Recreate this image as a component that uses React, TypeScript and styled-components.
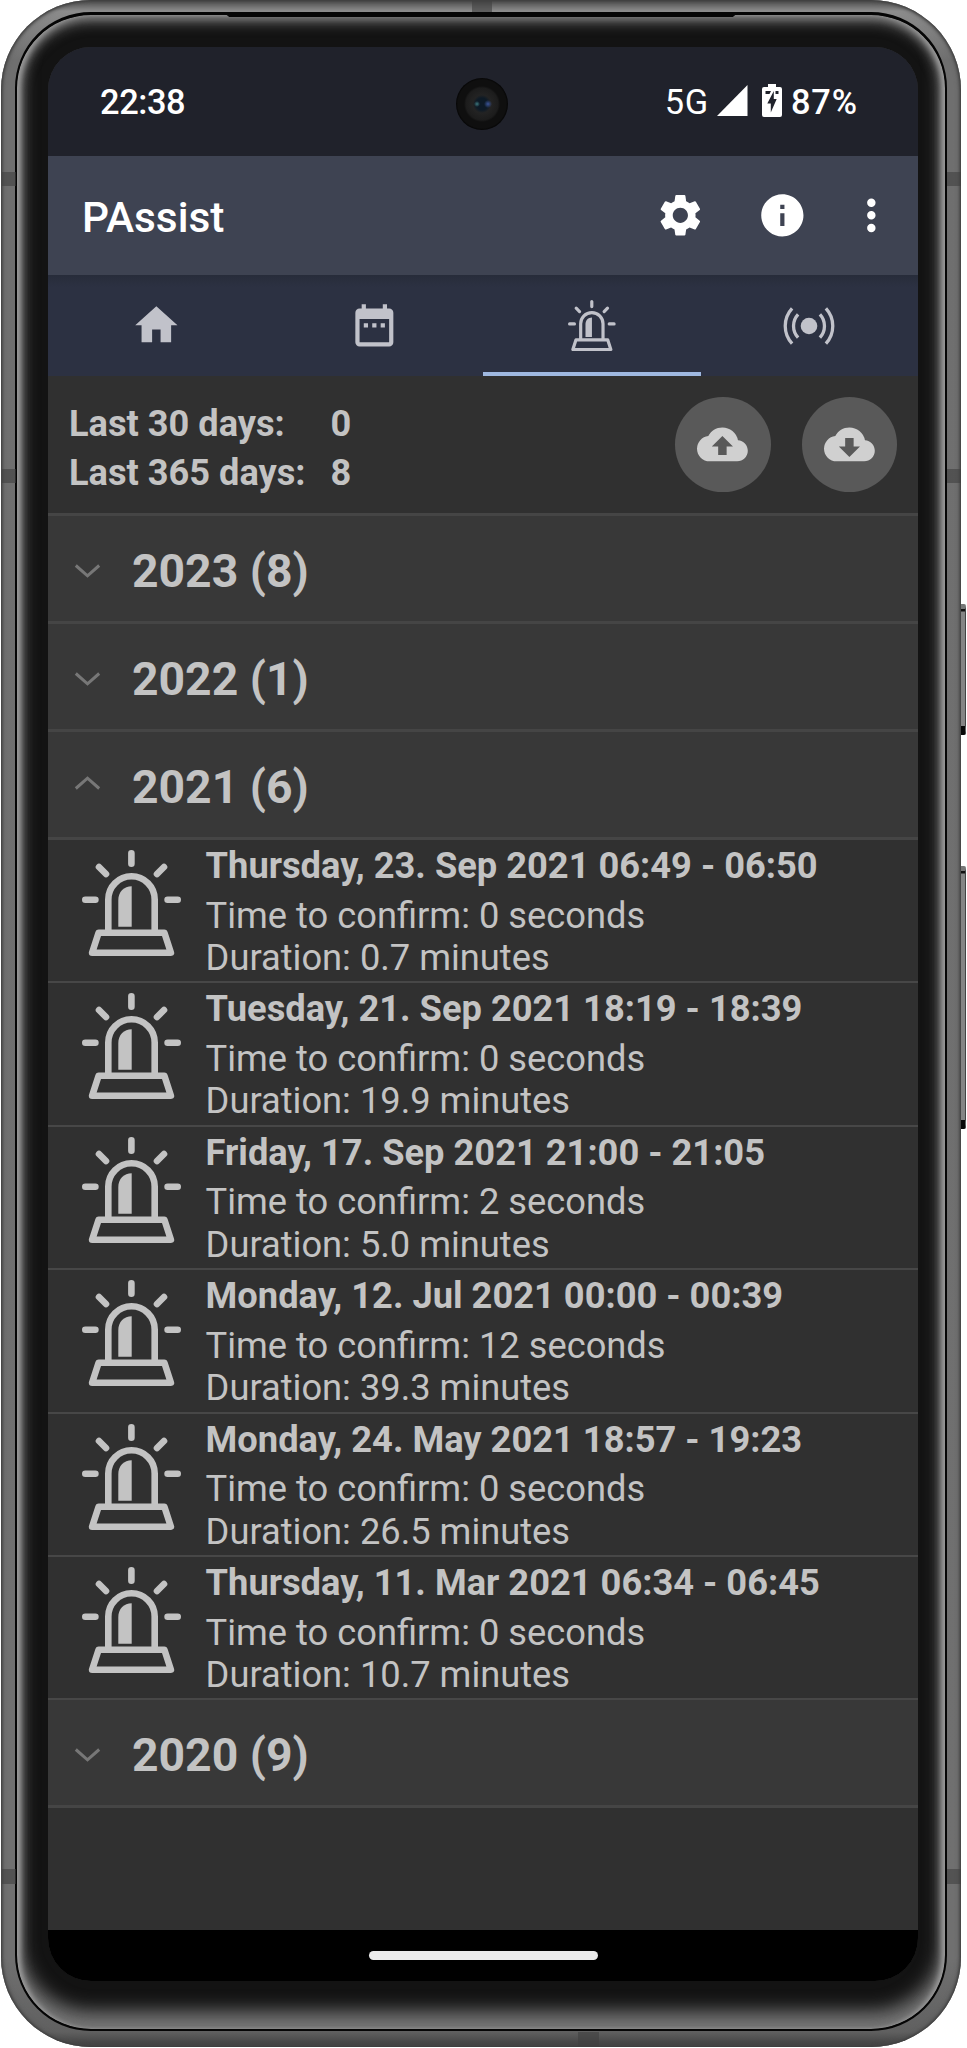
import React from 'react';
import styled, { createGlobalStyle, css } from 'styled-components';
import {
  MdSettings,
  MdInfo,
  MdMoreVert,
  MdHome,
  MdDateRange,
  MdCloudUpload,
  MdCloudDownload,
} from 'react-icons/md';

const GlobalStyle = createGlobalStyle`
  body {
    margin: 0;
    background: #fff;
    font-family: Roboto, 'Liberation Sans', sans-serif;
  }
`;

const Stage = styled.div`
  position: relative;
  width: 967px;
  height: 2048px;
  overflow: hidden;
  box-sizing: border-box;
  padding: 0 0 0 1px;
`;

const Frame = styled.div`
  position: relative;
  box-sizing: border-box;
  width: 960px;
  height: 2047px;
  padding: 12px 14px 16px;
  border-radius: 90px;
  background: linear-gradient(180deg, #4a4a4a 0, #8c8c8c 11px, #6f6f6f 60px, #707070 1960px, #606060 2032px, #3c3c3c 2047px);
  box-shadow: inset 0 0 3px 1px #3a3a3a, inset 0 0 5px 1px #555;
`;

const Glass = styled.div`
  box-sizing: border-box;
  height: 2019px;
  padding: 32px 31px 48px;
  border: 2px solid #050505;
  border-top-width: 3px;
  border-radius: 76px;
  background: #131313;
  box-shadow:
    inset 4px 0 4px -1px #9a9a9a,
    inset -4px 0 4px -1px #9a9a9a,
    inset 0 0 6px 4px #777,
    inset 0 5px 12px 4px #555,
    inset 0 -15px 18px 3px #747474;
`;

const Screen = styled.div`
  position: relative;
  display: flex;
  flex-direction: column;
  width: 870px;
  height: 1934px;
  border-radius: 43px;
  overflow: hidden;
  background: #303030;
  color: #c3c3c3;
`;

const SideButton = styled.div<{ $top: number; $height: number }>`
  position: absolute;
  left: 961px;
  top: ${(p) => p.$top}px;
  width: 5px;
  height: ${(p) => p.$height}px;
  box-sizing: border-box;
  border-top: 5px solid #777;
  border-bottom: 9px solid #080808;
  border-right: 1px solid #444;
  border-radius: 0 2px 2px 0;
  background: linear-gradient(180deg, #111 0 2px, #858585 3px);
`;

const Band = styled.div<{ $x: number; $y: number; $w: number; $h: number }>`
  position: absolute;
  left: ${(p) => p.$x}px;
  top: ${(p) => p.$y}px;
  width: ${(p) => p.$w}px;
  height: ${(p) => p.$h}px;
  background: rgba(64, 64, 64, 0.6);
`;

const Speaker = styled.div`
  position: absolute;
  left: 222px;
  top: 12px;
  width: 516px;
  height: 5px;
  background: #060606;
  clip-path: polygon(0 0, 100% 0, 98.8% 100%, 1.2% 100%);
`;

const Camera = styled.div`
  position: absolute;
  left: 408px;
  top: 31px;
  width: 52px;
  height: 52px;
  border-radius: 50%;
  background:
    radial-gradient(circle at 21px 26px, rgba(74, 143, 147, 0.8) 0, transparent 3px),
    radial-gradient(circle at 32px 26px, rgba(70, 99, 180, 0.8) 0, transparent 4px),
    radial-gradient(circle at 26px 26px, #0d1a26 0 6px, #232323 9px, #1c1c1c 16px, #0f0f0f 18px, #0f0f0f 24px, #050505 26px);
`;

const StatusBar = styled.header`
  display: flex;
  align-items: center;
  flex: 0 0 109px;
  height: 109px;
  box-sizing: border-box;
  padding: 1px 60px 0 52px;
  background: #20222b;
  color: #fff;
  font-size: 34.4px;
  font-weight: 500;
`;

const Clock = styled.span`
  flex: 1;
  letter-spacing: -0.4px;
`;

const Network = styled.span`
  font-weight: 400;
  letter-spacing: 0.7px;
  margin-right: 8px;
`;

const Battery = styled.span`
  letter-spacing: 0.9px;
`;

const SignalIcon = styled.svg`
  width: 31px;
  height: 31px;
  margin: -4px 14px 0 0;
  fill: #fff;
`;

const BatteryIcon = styled.svg`
  width: 20px;
  height: 33px;
  margin: -4px 9px 0 0;
`;

const Toolbar = styled.div`
  display: flex;
  align-items: center;
  flex: 0 0 119px;
  box-sizing: border-box;
  padding: 0 21px 0 34px;
  background: #3e4352;
  color: #fff;
  svg {
    display: block;
    width: 50.7px;
    height: 50.7px;
    margin-top: -1px;
  }
`;

const Title = styled.h1`
  flex: 1;
  margin: 3px 0 0;
  font-size: 42.4px;
  font-weight: 500;
`;

const ToolButton = styled.button<{ $gap: number }>`
  display: block;
  padding: 0;
  margin: 0 ${(p) => p.$gap}px 0 0;
  border: 0;
  background: none;
  color: #fff;
`;

const Tabs = styled.nav`
  display: grid;
  grid-template-columns: repeat(4, 1fr);
  flex: 0 0 101px;
  background: linear-gradient(180deg, #272c3a 0, #2c3142 12px);
`;

const Tab = styled.button<{ $active?: boolean }>`
  display: flex;
  align-items: center;
  justify-content: center;
  height: 101px;
  padding: 0;
  border: 0;
  background: none;
  color: #c1c2ca;
  ${(p) =>
    p.$active &&
    css`
      box-shadow: inset 0 -4px 0 #9fb8e0;
    `}
  svg {
    display: block;
  }
`;

const Summary = styled.section`
  display: flex;
  align-items: center;
  justify-content: space-between;
  flex: 0 0 140px;
  box-sizing: border-box;
  padding: 0 21px;
  border-bottom: 3px solid #454545;
`;

const Totals = styled.dl`
  display: grid;
  grid-template-columns: 261.5px auto;
  grid-auto-rows: 49px;
  margin: 6px 0 0;
  font-size: 36.2px;
  line-height: 49px;
  font-weight: 700;
  dt,
  dd {
    margin: 0;
  }
`;

const Actions = styled.div`
  display: flex;
  gap: 31px;
`;

const RoundButton = styled.button`
  display: flex;
  align-items: center;
  justify-content: center;
  width: 95.5px;
  height: 95.5px;
  padding: 0;
  border: 0;
  border-radius: 50%;
  background: #595959;
  color: #d0d0d0;
  svg {
    width: 50.8px;
    height: 50.8px;
  }
`;

const GroupHeader = styled.div`
  display: flex;
  align-items: center;
  flex: 0 0 108px;
  box-sizing: border-box;
  padding: 5px 0 0 26px;
  border-bottom: 3px solid #454545;
  background: #383838;
`;

const Chevron = styled.svg<{ $open: boolean }>`
  width: 27px;
  height: 16px;
  margin-top: ${(p) => (p.$open ? -8 : 0)}px;
  transform: ${(p) => (p.$open ? 'none' : 'scaleY(-1)')};
  fill: none;
  stroke: #777;
  stroke-width: 3;
`;

const GroupTitle = styled.h2`
  margin: 0 0 0 31px;
  font-size: 46.3px;
  line-height: 54px;
  font-weight: 700;
`;

const Item = styled.article`
  display: flex;
  align-items: flex-start;
  flex: 0 0 143.4px;
  height: 143.4px;
  box-sizing: border-box;
  padding: 4px 0 0 34.3px;
  border-bottom: 2px solid #474747;
`;

const ItemIcon = styled.div`
  flex: 0 0 123.3px;
  padding-top: 6px;
  svg {
    display: block;
  }
`;

const ItemTitle = styled.h3`
  margin: 0 0 7.6px;
  font-size: 36.27px;
  line-height: 43px;
  font-weight: 700;
  white-space: nowrap;
`;

const ItemLine = styled.p`
  margin: 0;
  font-size: 36.27px;
  line-height: 42.4px;
  white-space: nowrap;
`;

const NavBar = styled.footer`
  display: flex;
  justify-content: center;
  flex: 0 0 51px;
  box-sizing: border-box;
  margin-top: auto;
  padding-top: 21px;
  background: #000;
`;

const NavHandle = styled.div`
  width: 229px;
  height: 9px;
  border-radius: 5px;
  background: #ebebeb;
`;

const Siren = ({ width }: { width: number }) => (
  <svg
    width={width}
    height={(width * 106) / 99}
    viewBox="0 0 99 106"
    fill="none"
    stroke="currentColor"
    strokeWidth="6.6"
    strokeLinecap="round"
    strokeLinejoin="round"
  >
    <path d="M49.4 3.3V13.7M3.3 49.7H13.4M85.6 49.7H95.7M17 17L24 24M82 17L75 24" />
    <path d="M26.3 82V49.5a23.2 23.2 0 0 1 46.4 0V82" strokeLinecap="butt" />
    <path d="M16.6 82.7H82.4L88.9 102.7H10.1Z" />
    <path d="M36.3 76.7V50C36.3 42 42 36.3 49.7 36.3V76.7Z" fill="currentColor" stroke="none" />
  </svg>
);

const Broadcast = () => (
  <svg width="56" height="44" viewBox="-28 -22 56 44" fill="none" stroke="currentColor" strokeWidth="3.3">
    <circle r="8.3" fill="currentColor" stroke="none" />
    <path d="M-10.9 -11.6A17 17 0 0 0 -10.9 11.6M10.9 -11.6A17 17 0 0 1 10.9 11.6" />
    <path d="M-16.9 -17.6A26 26 0 0 0 -16.9 17.6M16.9 -17.6A26 26 0 0 1 16.9 17.6" />
  </svg>
);

const Group = ({ year, count, open = false }: { year: number; count: number; open?: boolean }) => (
  <GroupHeader>
    <Chevron $open={open} viewBox="-13.5 -8 27 16">
      <path d="M-11.7 5.5L0 -4.8L11.7 5.5" />
    </Chevron>
    <GroupTitle>
      {year} ({count})
    </GroupTitle>
  </GroupHeader>
);

const alarms = [
  { when: 'Thursday, 23. Sep 2021 06:49 - 06:50', confirm: 0, duration: '0.7' },
  { when: 'Tuesday, 21. Sep 2021 18:19 - 18:39', confirm: 0, duration: '19.9' },
  { when: 'Friday, 17. Sep 2021 21:00 - 21:05', confirm: 2, duration: '5.0' },
  { when: 'Monday, 12. Jul 2021 00:00 - 00:39', confirm: 12, duration: '39.3' },
  { when: 'Monday, 24. May 2021 18:57 - 19:23', confirm: 0, duration: '26.5' },
  { when: 'Thursday, 11. Mar 2021 06:34 - 06:45', confirm: 0, duration: '10.7' },
];

export default function App() {
  return (
    <Stage>
      <GlobalStyle />
      <SideButton $top={604} $height={131} />
      <SideButton $top={866} $height={263} />
      <Frame>
        <Band $x={1} $y={172} $w={14} $h={14} />
        <Band $x={1} $y={469} $w={14} $h={14} />
        <Band $x={1} $y={1869} $w={14} $h={15} />
        <Band $x={946} $y={172} $w={14} $h={14} />
        <Band $x={946} $y={469} $w={14} $h={14} />
        <Band $x={946} $y={1869} $w={14} $h={15} />
        <Band $x={471} $y={1} $w={20} $h={11} />
        <Band $x={577} $y={2032} $w={21} $h={14} />
        <Glass>
          <Screen>
            <StatusBar>
              <Clock>22:38</Clock>
              <Network>5G</Network>
              <SignalIcon viewBox="0 0 31 31">
                <path d="M0 31L30.5 0V31Z" />
              </SignalIcon>
              <BatteryIcon viewBox="0 0 20 33">
                <path d="M6 0H14V3H18Q20 3 20 5V31Q20 33 18 33H2Q0 33 0 31V5Q0 3 2 3H6Z" fill="#fff" />
                <path d="M3.5 7H9L7.5 10H3.5ZM13.5 7H16.5V10H13.5ZM11.8 7V15H14.7L8.8 28.5V19.5H5.3Z" fill="#20222b" />
              </BatteryIcon>
              <Battery>87%</Battery>
            </StatusBar>
            <Toolbar>
              <Title>PAssist</Title>
              <ToolButton $gap={51.9} aria-label="Settings">
                <MdSettings />
              </ToolButton>
              <ToolButton $gap={38.5} aria-label="Info">
                <MdInfo />
              </ToolButton>
              <ToolButton $gap={0} aria-label="More">
                <MdMoreVert />
              </ToolButton>
            </Toolbar>
            <Tabs>
              <Tab aria-label="Home">
                <MdHome size={50.7} />
              </Tab>
              <Tab aria-label="Calendar">
                <MdDateRange size={50.7} />
              </Tab>
              <Tab $active aria-label="Alarms">
                <Siren width={47.7} />
              </Tab>
              <Tab aria-label="Broadcast">
                <Broadcast />
              </Tab>
            </Tabs>
            <Summary>
              <Totals>
                <dt>Last 30 days:</dt>
                <dd>0</dd>
                <dt>Last 365 days:</dt>
                <dd>8</dd>
              </Totals>
              <Actions>
                <RoundButton aria-label="Upload">
                  <MdCloudUpload />
                </RoundButton>
                <RoundButton aria-label="Download">
                  <MdCloudDownload />
                </RoundButton>
              </Actions>
            </Summary>
            <Group year={2023} count={8} />
            <Group year={2022} count={1} />
            <Group year={2021} count={6} open />
            {alarms.map((a) => (
              <Item key={a.when}>
                <ItemIcon>
                  <Siren width={99} />
                </ItemIcon>
                <div>
                  <ItemTitle>{a.when}</ItemTitle>
                  <ItemLine>Time to confirm: {a.confirm} seconds</ItemLine>
                  <ItemLine>Duration: {a.duration} minutes</ItemLine>
                </div>
              </Item>
            ))}
            <Group year={2020} count={9} />
            <NavBar>
              <NavHandle />
            </NavBar>
            <Camera />
          </Screen>
        </Glass>
        <Speaker />
      </Frame>
    </Stage>
  );
}
